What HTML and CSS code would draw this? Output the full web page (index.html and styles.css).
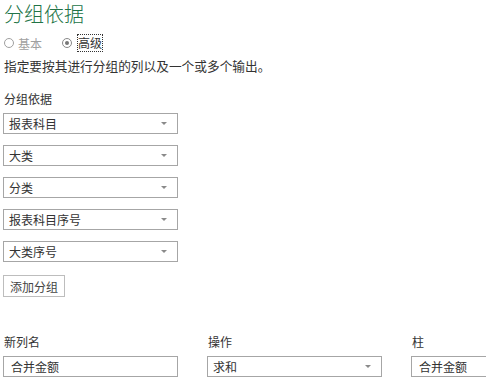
FILE: index.html
```html
<!DOCTYPE html>
<html>
<head>
  <title>分组依据</title>
  <link rel="stylesheet" href="styles.css">
</head>
<body>
  <div class="dialog">
    <h1 class="title">分组依据</h1>
    <div class="mode">
      <label class="radio disabled"><span class="dot"></span>基本</label>
      <label class="radio checked"><span class="dot"></span><span class="focus">高级</span></label>
    </div>
    <p class="desc">指定要按其进行分组的列以及一个或多个输出。</p>
    <div class="section-label">分组依据</div>
    <div class="groups">
      <div class="select"><span>报表科目</span><span class="arrow"></span></div>
      <div class="select"><span>大类</span><span class="arrow"></span></div>
      <div class="select"><span>分类</span><span class="arrow"></span></div>
      <div class="select"><span>报表科目序号</span><span class="arrow"></span></div>
      <div class="select"><span>大类序号</span><span class="arrow"></span></div>
    </div>
    <button class="add-button">添加分组</button>
    <div class="outputs">
      <div class="field">
        <div class="field-label">新列名</div>
        <div class="input">合并金额</div>
      </div>
      <div class="field">
        <div class="field-label">操作</div>
        <div class="select"><span>求和</span><span class="arrow"></span></div>
      </div>
      <div class="field wide">
        <div class="field-label">柱</div>
        <div class="input">合并金额</div>
      </div>
    </div>
  </div>
</body>
</html>
```

FILE: styles.css
```css
body {
  margin: 0;
  padding: 0;
  background-color: #ffffff;
  color: #333333;
  font-family: "Noto Sans CJK SC", "Noto Sans", sans-serif;
  font-size: 12px;
}
.dialog {
  box-sizing: border-box;
  width: 486px;
  height: 386px;
  padding: 0 0 0 3px;
  overflow: hidden;
}
.title {
  margin: 0;
  padding-left: 1px;
  font-size: 20px;
  font-weight: 300;
  line-height: 28px;
  color: #217346;
}
.mode {
  display: flex;
  align-items: center;
  gap: 19px;
  margin-top: 2px;
  height: 26px;
}
.radio {
  display: flex;
  align-items: center;
  gap: 4px;
  color: #333333;
}
.radio.disabled {
  color: #a0a0a0;
}
.radio .dot {
  width: 8px;
  height: 8px;
  border: 1px solid #a0a0a0;
  border-radius: 50%;
  margin-left: 1px;
  box-sizing: content-box;
  position: relative;
}
.radio.checked .dot {
  border-color: #888888;
}
.radio.checked .dot::after {
  content: "";
  position: absolute;
  left: 2px;
  top: 2px;
  width: 4px;
  height: 4px;
  border-radius: 50%;
  background-color: #777777;
}
.radio .focus {
  outline: 1px dotted #333333;
  line-height: 16px;
  margin-left: 2px;
}
.desc {
  margin: 0;
  padding-left: 1px;
  font-size: 12.7px;
  line-height: 20px;
}
.section-label {
  margin-top: 13px;
  padding-left: 1px;
  line-height: 20px;
}
.groups {
  display: flex;
  flex-direction: column;
  gap: 11px;
  margin-top: 4px;
}
.select,
.input {
  box-sizing: border-box;
  width: 175px;
  height: 21px;
  border: 1px solid #a6a6a6;
  display: flex;
  align-items: center;
  justify-content: space-between;
  padding: 0 10px 0 5px;
  line-height: 19px;
}
.arrow {
  width: 0;
  height: 0;
  border-left: 3px solid transparent;
  border-right: 3px solid transparent;
  border-top: 3px solid #8a8a8a;
}
.add-button {
  display: block;
  margin-top: 13px;
  width: 62px;
  height: 22px;
  padding: 0;
  background-color: #ffffff;
  border: 1px solid #bdbdbd;
  color: #444444;
  font-family: inherit;
  font-size: 12px;
}
.outputs {
  display: flex;
  gap: 29px;
  margin-top: 35px;
}
.field-label {
  padding-left: 1px;
  line-height: 20px;
  margin-bottom: 4px;
}
.field .input {
  padding-left: 7px;
}
.field.wide .input {
  width: 120px;
}
```
